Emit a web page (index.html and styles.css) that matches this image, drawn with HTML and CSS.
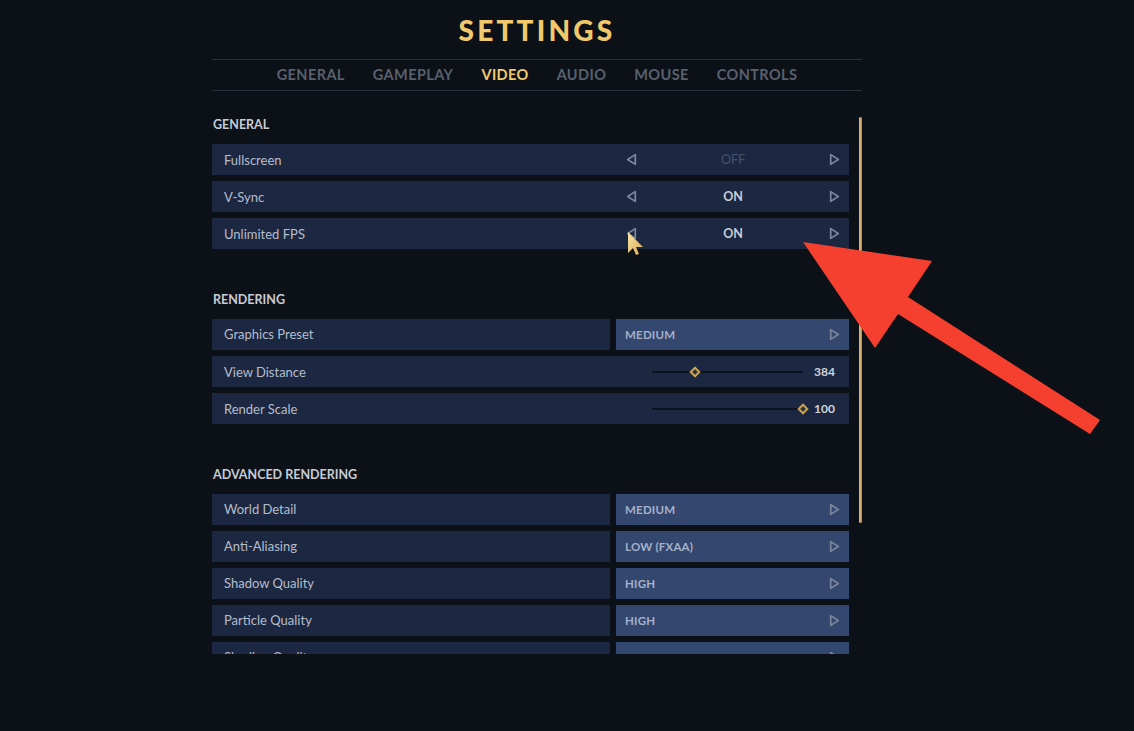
FILE: index.html
```html
<!DOCTYPE html>
<html>
<head>
    <meta name="viewport" content="width=device-width, initial-scale=1.0"/>
    <title>Settings</title>
    <link rel="stylesheet" href="styles.css">
</head>
<body>
    <div class="settings">
        <h1 class="settings-title">SETTINGS</h1>
        <nav class="tabs">
            <span class="tab">GENERAL</span>
            <span class="tab">GAMEPLAY</span>
            <span class="tab active">VIDEO</span>
            <span class="tab">AUDIO</span>
            <span class="tab">MOUSE</span>
            <span class="tab">CONTROLS</span>
        </nav>

        <div class="content">
            <div class="list">
                <section class="section">
                    <h2 class="section-title">GENERAL</h2>
                    <div class="row toggle">
                        <span class="label">Fullscreen</span>
                        <div class="toggle-ctrl">
                            <svg class="arrow" viewBox="0 0 10 12"><path d="M8.5 1.5 L1.5 6 L8.5 10.5 Z"/></svg>
                            <span class="toggle-value off">OFF</span>
                            <svg class="arrow" viewBox="0 0 10 12"><path d="M1.5 1.5 L8.5 6 L1.5 10.5 Z"/></svg>
                        </div>
                    </div>
                    <div class="row toggle">
                        <span class="label">V-Sync</span>
                        <div class="toggle-ctrl">
                            <svg class="arrow" viewBox="0 0 10 12"><path d="M8.5 1.5 L1.5 6 L8.5 10.5 Z"/></svg>
                            <span class="toggle-value">ON</span>
                            <svg class="arrow" viewBox="0 0 10 12"><path d="M1.5 1.5 L8.5 6 L1.5 10.5 Z"/></svg>
                        </div>
                    </div>
                    <div class="row toggle">
                        <span class="label">Unlimited FPS</span>
                        <div class="toggle-ctrl">
                            <svg class="arrow" viewBox="0 0 10 12"><path d="M8.5 1.5 L1.5 6 L8.5 10.5 Z"/></svg>
                            <span class="toggle-value">ON</span>
                            <svg class="arrow" viewBox="0 0 10 12"><path d="M1.5 1.5 L8.5 6 L1.5 10.5 Z"/></svg>
                        </div>
                    </div>
                </section>

                <section class="section">
                    <h2 class="section-title">RENDERING</h2>
                    <div class="row select">
                        <span class="label">Graphics Preset</span>
                        <div class="select-ctrl">
                            <span>MEDIUM</span>
                            <svg class="arrow" viewBox="0 0 10 12"><path d="M1.5 1.5 L8.5 6 L1.5 10.5 Z"/></svg>
                        </div>
                    </div>
                    <div class="row slider">
                        <span class="label">View Distance</span>
                        <div class="slider-ctrl">
                            <div class="track">
                                <span class="thumb" style="left: 28.5%"></span>
                            </div>
                            <span class="slider-value">384</span>
                        </div>
                    </div>
                    <div class="row slider">
                        <span class="label">Render Scale</span>
                        <div class="slider-ctrl">
                            <div class="track">
                                <span class="thumb" style="left: 100%"></span>
                            </div>
                            <span class="slider-value">100</span>
                        </div>
                    </div>
                </section>

                <section class="section">
                    <h2 class="section-title">ADVANCED RENDERING</h2>
                    <div class="row select">
                        <span class="label">World Detail</span>
                        <div class="select-ctrl">
                            <span>MEDIUM</span>
                            <svg class="arrow" viewBox="0 0 10 12"><path d="M1.5 1.5 L8.5 6 L1.5 10.5 Z"/></svg>
                        </div>
                    </div>
                    <div class="row select">
                        <span class="label">Anti-Aliasing</span>
                        <div class="select-ctrl">
                            <span>LOW (FXAA)</span>
                            <svg class="arrow" viewBox="0 0 10 12"><path d="M1.5 1.5 L8.5 6 L1.5 10.5 Z"/></svg>
                        </div>
                    </div>
                    <div class="row select">
                        <span class="label">Shadow Quality</span>
                        <div class="select-ctrl">
                            <span>HIGH</span>
                            <svg class="arrow" viewBox="0 0 10 12"><path d="M1.5 1.5 L8.5 6 L1.5 10.5 Z"/></svg>
                        </div>
                    </div>
                    <div class="row select">
                        <span class="label">Particle Quality</span>
                        <div class="select-ctrl">
                            <span>HIGH</span>
                            <svg class="arrow" viewBox="0 0 10 12"><path d="M1.5 1.5 L8.5 6 L1.5 10.5 Z"/></svg>
                        </div>
                    </div>
                    <div class="row select">
                        <span class="label">Shading Quality</span>
                        <div class="select-ctrl">
                            <span>MEDIUM</span>
                            <svg class="arrow" viewBox="0 0 10 12"><path d="M1.5 1.5 L8.5 6 L1.5 10.5 Z"/></svg>
                        </div>
                    </div>
                </section>
            </div><!-- .list -->
            <div class="scrollbar"></div>
        </div><!-- .content -->
    </div><!-- .settings -->

    <!-- mouse pointer -->
    <svg class="cursor" viewBox="0 0 18 26" width="18" height="26">
        <defs>
            <linearGradient id="cur" x1="0" y1="0" x2="1" y2="1">
                <stop offset="0" stop-color="#fbe6a6"/>
                <stop offset="1" stop-color="#d9a94e"/>
            </linearGradient>
        </defs>
        <path d="M1 1 L1 22 L6 17 L9 24 L12 23 L9 16 L16 16 Z" fill="url(#cur)"/>
    </svg>

    <!-- red annotation arrow -->
    <svg class="annotation" viewBox="0 0 1134 731" width="1134" height="731">
        <polygon points="803,242 932,261 908,297 1100,420 1090,434 898,314 875,348" fill="#f5402f"/>
    </svg>
</body>
</html>
```

FILE: styles.css
```css
* {
    margin: 0;
    padding: 0;
    box-sizing: border-box;
}

body {
    width: 1134px;
    height: 731px;
    background: #0c1118;
    font-family: Lato, "Noto Sans", sans-serif;
    overflow: hidden;
    position: relative;
}

.settings {
    width: 650px;
    margin-left: 212px;
}

.settings-title {
    height: 59px;
    line-height: 60px;
    text-align: center;
    font-size: 28px;
    font-weight: 900;
    letter-spacing: 3.2px;
    color: #f2c96a;
}

.tabs {
    display: flex;
    justify-content: center;
    gap: 28px;
    height: 32px;
    line-height: 30px;
    border-top: 1px solid #2b313b;
    border-bottom: 1px solid #2b313b;
    font-size: 14.5px;
    font-weight: 700;
    letter-spacing: 0.4px;
    color: #58606d;
}

.tab.active {
    color: #f2c96a;
}

.content {
    display: flex;
    gap: 10px;
    height: 563px;
    overflow: hidden;
}

.list {
    width: 637px;
    padding-top: 26px;
}

.section {
    margin-bottom: 43px;
}

.section-title {
    font-size: 12.5px;
    line-height: 16px;
    font-weight: 700;
    color: #c6cbd4;
    margin-bottom: 11px;
    padding-left: 1px;
}

.row {
    display: grid;
    grid-template-columns: 1fr 233px;
    column-gap: 6px;
    height: 31px;
    margin-bottom: 6px;
    align-items: center;
}

.label {
    padding-left: 12px;
    font-size: 13px;
    color: #b6bdcb;
}

.toggle,
.slider {
    background: #1c2841;
}

.arrow {
    width: 11px;
    height: 13px;
    fill: none;
    stroke: #7b869c;
    stroke-width: 1.6;
    stroke-linejoin: round;
}

.toggle-ctrl {
    display: flex;
    align-items: center;
    justify-content: space-between;
    padding: 0 9px 0 10px;
}

.toggle-value {
    font-size: 12.5px;
    font-weight: 700;
    color: #c9cdd5;
}

.toggle-value.off {
    color: #46506a;
    font-weight: 400;
}

.select .label {
    background: #1c2841;
    height: 31px;
    line-height: 31px;
}

.select-ctrl {
    height: 31px;
    background: #33476f;
    display: flex;
    align-items: center;
    justify-content: space-between;
    padding: 0 9px 0 9px;
    font-size: 11.5px;
    font-weight: 700;
    color: #a6b1ca;
    letter-spacing: 0.2px;
}

.slider-ctrl {
    display: flex;
    align-items: center;
    padding: 0 14px 0 36px;
}

.track {
    position: relative;
    width: 151px;
    height: 2px;
    background: #0c131f;
}

.thumb {
    position: absolute;
    top: 50%;
    width: 8px;
    height: 8px;
    margin: -4px 0 0 -4px;
    background: #2a3140;
    border: 2px solid #c9a24a;
    transform: rotate(45deg);
}

.slider-value {
    margin-left: auto;
    font-size: 12px;
    font-weight: 700;
    color: #cfd3da;
}

.scrollbar {
    width: 3px;
    height: 406px;
    margin-top: 26px;
    border-radius: 2px;
    background: linear-gradient(90deg, #e6c27e, #b58a4c);
}

.cursor {
    position: absolute;
    left: 627px;
    top: 231px;
}

.annotation {
    position: absolute;
    left: 0;
    top: 0;
    pointer-events: none;
}
```
